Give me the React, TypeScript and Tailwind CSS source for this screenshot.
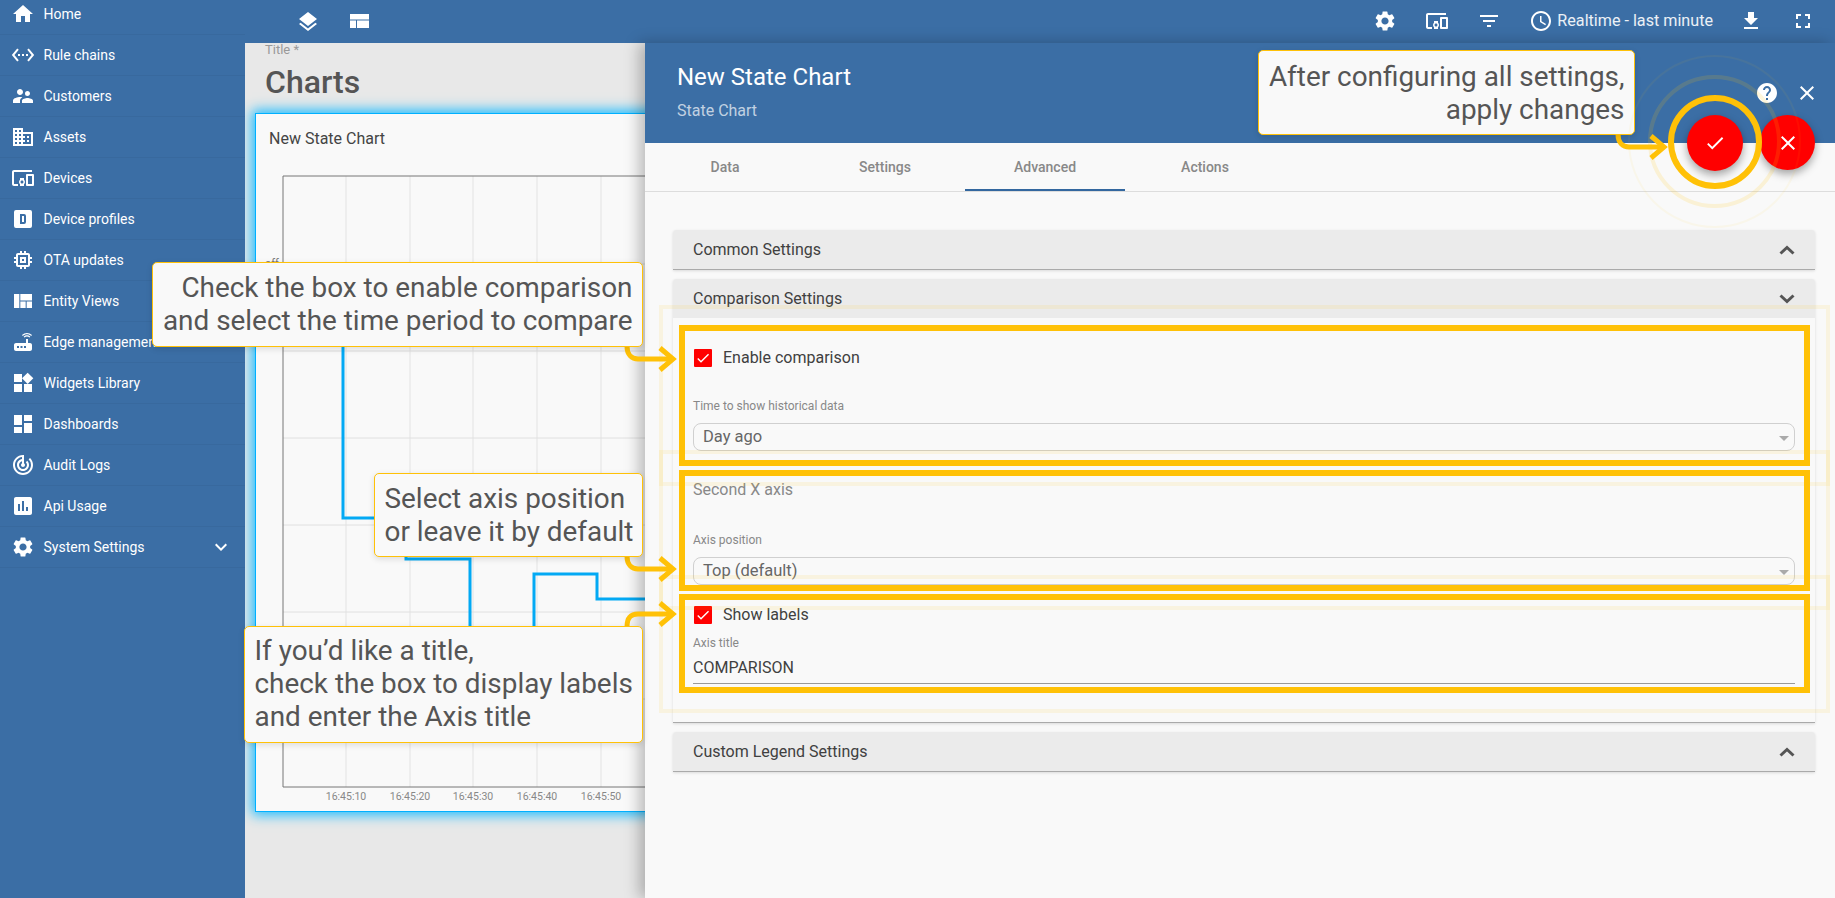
import { ReactNode } from 'react'
import {
  MdHome,
  MdSettingsEthernet,
  MdSupervisorAccount,
  MdDomain,
  MdDevicesOther,
  MdMemory,
  MdViewQuilt,
  MdRouter,
  MdWidgets,
  MdDashboard,
  MdTrackChanges,
  MdAssessment,
  MdSettings,
  MdKeyboardArrowDown,
  MdLayers,
  MdFilterList,
  MdAccessTime,
  MdFileDownload,
  MdFullscreen,
  MdHelp,
  MdClose,
  MdCheck,
} from 'react-icons/md'

function ProfileIcon() {
  return (
    <svg viewBox="0 0 24 24" width="24" height="24" fill="currentColor">
      <path
        fillRule="evenodd"
        d="M5 3h14a2 2 0 0 1 2 2v14a2 2 0 0 1-2 2H5a2 2 0 0 1-2-2V5a2 2 0 0 1 2-2zM9 7v10h4a2 2 0 0 0 2-2V9a2 2 0 0 0-2-2H9zm2 2h2v6h-2z"
      />
    </svg>
  )
}

function LayoutIcon() {
  return (
    <svg viewBox="0 0 20 15" width="20" height="15" fill="currentColor">
      <rect x="0" y="0" width="19" height="5.5" />
      <rect x="0" y="6.5" width="6" height="7.5" />
      <rect x="7" y="6.5" width="12" height="7.5" />
    </svg>
  )
}

function Chevron({ up }: { up?: boolean }) {
  return (
    <svg width="16" height="10" viewBox="0 0 16 10" fill="none" stroke="#555" strokeWidth="3">
      <path d={up ? 'M1.5 8.5 L8 2.5 L14.5 8.5' : 'M1.5 1.5 L8 7.5 L14.5 1.5'} />
    </svg>
  )
}

const menu: { label: string; icon: ReactNode }[] = [
  { label: 'Home', icon: <MdHome size={24} /> },
  { label: 'Rule chains', icon: <MdSettingsEthernet size={24} /> },
  { label: 'Customers', icon: <MdSupervisorAccount size={24} /> },
  { label: 'Assets', icon: <MdDomain size={24} /> },
  { label: 'Devices', icon: <MdDevicesOther size={24} /> },
  { label: 'Device profiles', icon: <ProfileIcon /> },
  { label: 'OTA updates', icon: <MdMemory size={24} /> },
  { label: 'Entity Views', icon: <MdViewQuilt size={24} /> },
  { label: 'Edge management', icon: <MdRouter size={24} /> },
  { label: 'Widgets Library', icon: <MdWidgets size={24} /> },
  { label: 'Dashboards', icon: <MdDashboard size={24} /> },
  { label: 'Audit Logs', icon: <MdTrackChanges size={24} /> },
  { label: 'Api Usage', icon: <MdAssessment size={24} /> },
  { label: 'System Settings', icon: <MdSettings size={24} /> },
]

function Sidebar() {
  return (
    <aside className="h-full w-[245px] shrink-0 overflow-hidden bg-[#3b6ea5] text-white">
      <div className="-mt-[6px]">
        {menu.map((item) => (
          <div key={item.label} className="flex h-[41px] items-center border-b border-[#38699e] pl-[11px] pr-[12px] text-[14px]">
            <span className="w-[32.5px] shrink-0">{item.icon}</span>
            <span className="flex-1 whitespace-nowrap">{item.label}</span>
            {item.label === 'System Settings' && <MdKeyboardArrowDown size={24} />}
          </div>
        ))}
      </div>
    </aside>
  )
}

function TopBar() {
  return (
    <header className="flex h-[43px] shrink-0 items-center bg-[#3b6ea5] text-white">
      <div className="ml-[51px] flex items-center">
        <MdLayers size={24} />
        <span className="ml-[30px]">
          <LayoutIcon />
        </span>
      </div>
      <div className="ml-auto flex items-center pr-[20px]">
        <MdSettings size={24} />
        <MdDevicesOther size={24} className="ml-[28px]" />
        <MdFilterList size={24} className="ml-[28px]" />
        <MdAccessTime size={24} className="ml-[28px]" />
        <span className="ml-[4px] text-[16.15px] text-white/90">Realtime - last minute</span>
        <MdFileDownload size={24} className="ml-[26px]" />
        <MdFullscreen size={24} className="ml-[28px]" />
      </div>
    </header>
  )
}

const gridX = [346, 410, 473, 537, 601]
const gridY = [264, 351, 438, 525, 612, 699]
const times = ['16:45:10', '16:45:20', '16:45:30', '16:45:40', '16:45:50']

// chart drawing, coordinates are relative to the card body (origin 256,160)
function StateChart() {
  const ox = 256
  const oy = 160
  return (
    <svg width="400" height="650" className="block">
      {gridX.map((x) => (
        <line key={x} x1={x - ox} x2={x - ox} y1={176 - oy} y2={787 - oy} stroke="#e3e3e3" strokeWidth="1" />
      ))}
      {gridY.map((y) => (
        <line key={y} x1={283 - ox} x2={400} y1={y - oy} y2={y - oy} stroke="#e0e0e0" strokeWidth="1" />
      ))}
      <path d={`M${283 - ox} ${787 - oy} V${176 - oy} H400`} fill="none" stroke="#777" strokeWidth="1" />
      <line x1={283 - ox} x2={400} y1={787 - oy} y2={787 - oy} stroke="#777" strokeWidth="1" />
      <path
        d={`M${343 - ox} ${300 - oy} V${518 - oy} H${406 - ox} V${559 - oy} H${470 - ox} V${640 - oy} M${534 - ox} ${640 - oy} V${574 - oy} H${597 - ox} V${599 - oy} H400`}
        fill="none"
        stroke="#03a9f4"
        strokeWidth="3"
      />
      <text x={265 - ox} y={267 - oy} fontSize="11" fill="#777" fontFamily="Roboto, sans-serif">
        off
      </text>
      {times.map((t, i) => (
        <text key={t} x={gridX[i] - ox} y={800 - oy} fontSize="10.5" fill="#888" textAnchor="middle" fontFamily="Roboto, sans-serif">
          {t}
        </text>
      ))}
    </svg>
  )
}

function Dashboard() {
  return (
    <div className="min-w-0 flex-1 overflow-hidden bg-[#e8e8e8]">
      <div className="h-[60px] pl-[20px]">
        <div className="text-[13px] leading-[14px] text-[#999]">Title *</div>
        <div className="mt-[7px] text-[32px] leading-[36px] font-medium text-[#555]">Charts</div>
      </div>
      <div className="ml-[10px] mt-[10px] h-[699px] w-[600px] border border-[#00b0ff] bg-[#f9f9f9] shadow-[0_0_12px_3px_#1cbcff]">
        <div className="pl-[13px] pt-[15px] text-[16px] leading-[19px] text-[#444]">New State Chart</div>
        <div className="mt-[12px]">
          <StateChart />
        </div>
      </div>
    </div>
  )
}

function Accordion({ title, open, children }: { title: string; open?: boolean; children?: ReactNode }) {
  return (
    <section className="rounded-t-[3px] border-b-[1.5px] border-[#aaa] shadow-[0_1px_3px_rgba(0,0,0,0.12)]">
      <div className="flex h-[39px] items-center justify-between rounded-t-[3px] bg-[#ebebeb] pl-[20px] pr-[20px]">
        <span className="text-[16px] leading-[20px] text-[#404040]">{title}</span>
        <Chevron up={!open} />
      </div>
      {children}
    </section>
  )
}

function Checkbox({ label }: { label: string }) {
  return (
    <div className="flex items-center">
      <span className="ml-[1px] flex h-[18px] w-[18px] items-center justify-center rounded-[1px] bg-[#ff0000] text-white">
        <MdCheck size={16} />
      </span>
      <span className="ml-[11px] text-[16px] leading-[18px] text-[#404040]">{label}</span>
    </div>
  )
}

function SelectField({ value }: { value: string }) {
  return (
    <div className="flex h-[28px] items-center justify-between rounded-[8px] border border-[#d0d0d0] pl-[9px] pr-[5px] text-[16.5px] text-[#666]">
      <span>{value}</span>
      <span className="mt-[3px] h-0 w-0 border-x-[5px] border-t-[5px] border-x-transparent border-t-[#aaa]" />
    </div>
  )
}

function SettingsPanel() {
  return (
    <div className="z-10 flex w-[1190px] shrink-0 flex-col bg-[#f9f9f9] shadow-[-6px_0_14px_rgba(0,0,0,0.25)]">
      <div className="flex h-[100px] shrink-0 justify-between bg-[#3b6ea5] pl-[32px] text-white">
        <div>
          <div className="pt-[20px] text-[24px] leading-[28px]">New State Chart</div>
          <div className="mt-[11px] text-[16px] leading-[18px] text-white/70">State Chart</div>
        </div>
        <div className="flex items-start gap-[16px] pr-[16px] pt-[38px]">
          <MdHelp size={24} />
          <MdClose size={24} />
        </div>
      </div>
      <div className="flex h-[49px] shrink-0 border-b border-[#ddd] text-[14px] font-medium text-[#888]">
        {['Data', 'Settings', 'Advanced', 'Actions'].map((tab) => (
          <div key={tab} className={`flex w-[160px] items-center justify-center pt-[2px] ${tab === 'Advanced' ? 'border-b-2 border-[#33679f]' : 'border-b-2 border-transparent'}`}>
            {tab}
          </div>
        ))}
      </div>
      <div className="flex flex-col gap-[9px] pl-[28px] pr-[20px] pt-[38px]">
        <Accordion title="Common Settings" />
        <Accordion title="Comparison Settings" open>
          <div className="h-[404px] px-[20px]">
            <div className="pt-[31px]">
              <Checkbox label="Enable comparison" />
            </div>
            <div className="mt-[31px] text-[12px] leading-[16px] text-[#888]">Time to show historical data</div>
            <div className="mt-[9px]">
              <SelectField value="Day ago" />
            </div>
            <div className="mt-[29px] text-[16px] leading-[20px] text-[#888]">Second X axis</div>
            <div className="mt-[32px] text-[12px] leading-[16px] text-[#888]">Axis position</div>
            <div className="mt-[9px]">
              <SelectField value="Top (default)" />
            </div>
            <div className="mt-[21px]">
              <Checkbox label="Show labels" />
            </div>
            <div className="mt-[11px] text-[12px] leading-[16px] text-[#888]">Axis title</div>
            <div className="mt-[7px] border-b border-[#999] pb-[5px] text-[16px] leading-[20px] text-[#404040]">COMPARISON</div>
          </div>
        </Accordion>
        <Accordion title="Custom Legend Settings" />
      </div>
    </div>
  )
}

function Callout({ className, children }: { className: string; children: ReactNode }) {
  return (
    <div className={`absolute whitespace-nowrap rounded-[5px] border-[1.5px] border-[#ffc107] bg-[#f9f9f9] px-[9.5px] text-[27.9px] leading-[33.3px] text-[#555] shadow-[0_2px_6px_rgba(0,0,0,0.12)] ${className}`}>
      {children}
    </div>
  )
}

// curved yellow pointer, tip at the right end
function Arrow({ className, up }: { className: string; up?: boolean }) {
  return (
    <svg width="54" height="26" viewBox="0 0 54 26" fill="none" stroke="#ffc107" strokeWidth="5" className={`absolute ${className}`}>
      <path d={up ? 'M3 26 C3 15 8 13 14 13 H49' : 'M3 0 C3 9 8 13 14 13 H49'} />
      <path d="M36 2 L49 13 L36 24" />
    </svg>
  )
}

function Overlays() {
  return (
    <div className="absolute inset-0 z-20">
      {/* pulse outlines */}
      <div className="absolute left-[659px] top-[305px] h-[181px] w-[1171px] border-[4px] border-[#ffc107]/10" />
      <div className="absolute left-[659px] top-[450px] h-[160px] w-[1171px] border-[4px] border-[#ffc107]/10" />
      <div className="absolute left-[659px] top-[575px] h-[138px] w-[1171px] border-[4px] border-[#ffc107]/10" />
      <div className="absolute left-[679px] top-[325px] h-[141px] w-[1131px] border-[6px] border-[#ffc107]" />
      <div className="absolute left-[679px] top-[470px] h-[121px] w-[1131px] border-[6px] border-[#ffc107]" />
      <div className="absolute left-[679px] top-[594px] h-[99px] w-[1131px] border-[6px] border-[#ffc107]" />

      <Arrow className="left-[624px] top-[346px]" />
      <Arrow className="left-[624px] top-[556px]" />
      <Arrow className="left-[624px] top-[601px]" up />
      <Arrow className="left-[1615px] top-[134px]" />

      <Callout className="left-[152px] top-[262px] h-[85px] w-[491px] pt-[8px] text-right">
        Check the box to enable comparison
        <br />
        and select the time period to compare
      </Callout>
      <Callout className="left-[374px] top-[473px] h-[84px] w-[269px] pt-[7.5px]">
        Select axis position
        <br />
        or leave it by default
      </Callout>
      <Callout className="left-[244px] top-[626px] h-[117px] w-[399px] pt-[6.5px]">
        If you’d like a title,
        <br />
        check the box to display labels
        <br />
        and enter the Axis title
      </Callout>
      <Callout className="left-[1258px] top-[50px] h-[85px] w-[377px] pt-[9px] text-right">
        After configuring all settings,
        <br />
        apply changes
      </Callout>

      {/* save and close buttons with the ring round them */}
      <div className="absolute left-[1760px] top-[115px] flex h-[55px] w-[55px] items-center justify-center rounded-full bg-[#ff0000] text-white shadow-[0_4px_8px_rgba(0,0,0,0.35)]">
        <MdClose size={24} />
      </div>
      <div className="absolute left-[1687px] top-[115px] flex h-[56px] w-[56px] items-center justify-center rounded-full bg-[#ff0000] text-white shadow-[0_4px_8px_rgba(0,0,0,0.35)]">
        <MdCheck size={22} />
      </div>
      <div className="absolute left-[1628px] top-[55px] h-[173px] w-[173px] rounded-full border-[2px] border-[#ffc107]/[0.06]" />
      <div className="absolute left-[1648px] top-[75px] h-[133px] w-[133px] rounded-full border-[4px] border-[#ffc107]/15" />
      <div className="absolute left-[1668px] top-[95px] h-[94px] w-[94px] rounded-full border-[6px] border-[#ffc107]" />
    </div>
  )
}

export default function App() {
  return (
    <div className="relative flex h-[898px] w-[1835px] overflow-hidden bg-[#f9f9f9] font-['Roboto',sans-serif]">
      <Sidebar />
      <div className="flex min-w-0 flex-1 flex-col">
        <TopBar />
        <div className="flex min-h-0 flex-1">
          <Dashboard />
          <SettingsPanel />
        </div>
      </div>
      <Overlays />
    </div>
  )
}
